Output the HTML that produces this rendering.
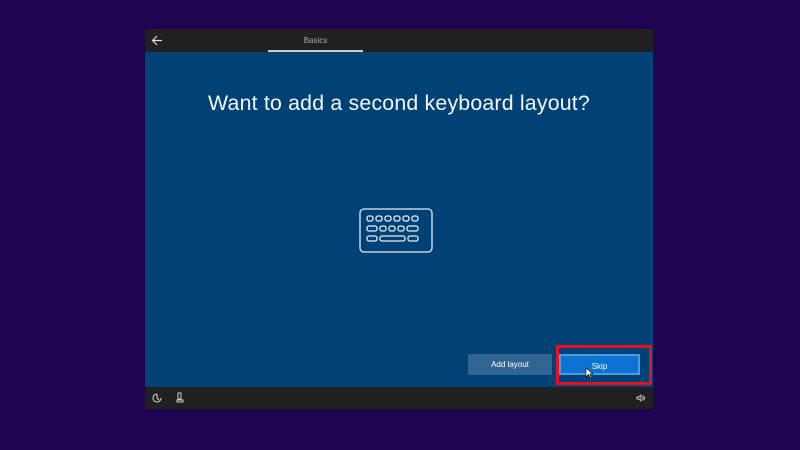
<!DOCTYPE html><html><head><style>
body{margin:0;width:800px;height:450px;background:#1c0453;position:relative;overflow:hidden;font-family:"Liberation Sans",sans-serif}
.w{position:absolute;left:145px;top:29px;width:508px;height:380px;background:#004275}
.top{position:absolute;left:0;top:0;width:508px;height:23px;background:#202020}
.bot{position:absolute;left:0;top:358px;width:508px;height:22px;background:#202020}
.tab{position:absolute;left:123px;top:0;width:95px;height:23px;color:#aaa;font-size:8px;text-align:center;line-height:24px}
.tab:after{content:"";position:absolute;left:0;bottom:0;width:95px;height:2px;background:#ccc}
h1{position:absolute;left:0;width:508px;top:62px;margin:0;text-align:center;color:#f4f7fa;font-weight:normal;font-size:21.3px;letter-spacing:0.2px}
.b{position:absolute;top:325px;height:21px;color:#fff;font-size:8px;text-align:center;line-height:21px;box-sizing:border-box}
</style></head><body>
<div class="w">
<div class="top"><svg style="position:absolute;left:6px;top:6px" width="12" height="11"><path d="M11 5.5H1.5M6 1L1.5 5.5 6 10" stroke="#ddd" stroke-width="1.2" fill="none"/></svg><div class="tab">Basics</div></div>
<h1>Want to add a second keyboard layout?</h1>
<svg style="position:absolute;left:214px;top:179px" width="76" height="46" fill="none" stroke="#e8eef5" stroke-width="1.3">
<rect x="1" y="1" width="72" height="43" rx="4"/>
<rect x="8" y="8" width="6" height="5" rx="2"/><rect x="17" y="8" width="6" height="5" rx="2"/><rect x="26" y="8" width="6" height="5" rx="2"/><rect x="35" y="8" width="6" height="5" rx="2"/><rect x="44" y="8" width="6" height="5" rx="2"/><rect x="53" y="8" width="6" height="5" rx="2"/>
<rect x="8" y="18" width="10" height="5" rx="2"/><rect x="21" y="18" width="6" height="5" rx="2"/><rect x="30" y="18" width="6" height="5" rx="2"/><rect x="39" y="18" width="6" height="5" rx="2"/><rect x="48" y="18" width="11" height="5" rx="2"/>
<rect x="8" y="28" width="10" height="5" rx="2"/><rect x="21" y="28" width="25" height="5" rx="2"/><rect x="49" y="28" width="10" height="5" rx="2"/>
</svg>
<div class="b" style="left:323px;width:84px;background:#2f6590">Add layout</div>
<div class="b" style="left:414px;width:81px;background:#0a74d0;border:2px solid #4a9be0">Skip</div>
<div style="position:absolute;left:411px;top:316px;width:90px;height:34px;border:3px solid #e8101e"></div>
<svg style="position:absolute;left:440px;top:338px" width="8" height="12"><path d="M1 1v9l2.5-2.5 2 3.5 1.3-.7-2-3.4H8z" fill="#fff" stroke="#000" stroke-width=".6"/></svg>
<div class="bot">
<svg style="position:absolute;left:7px;top:6px" width="10" height="10"><path d="M5 1a4 4 0 1 0 4 4M5 1v4l2 2" stroke="#ccc" fill="none" stroke-width="1.1"/></svg>
<svg style="position:absolute;left:31px;top:5px" width="8" height="11"><path d="M2 1h3v6H2zM1 8h6v2H1z" stroke="#ccc" fill="none" stroke-width="1"/></svg>
<svg style="position:absolute;left:491px;top:7px" width="9" height="8"><path d="M1 3h2l2-2v6L3 5H1zM6.5 2.5q1 1.5 0 3M7.5 1.5q2 2.5 0 5" stroke="#ccc" fill="none" stroke-width=".9"/></svg>
</div>
</div>
</body></html>
